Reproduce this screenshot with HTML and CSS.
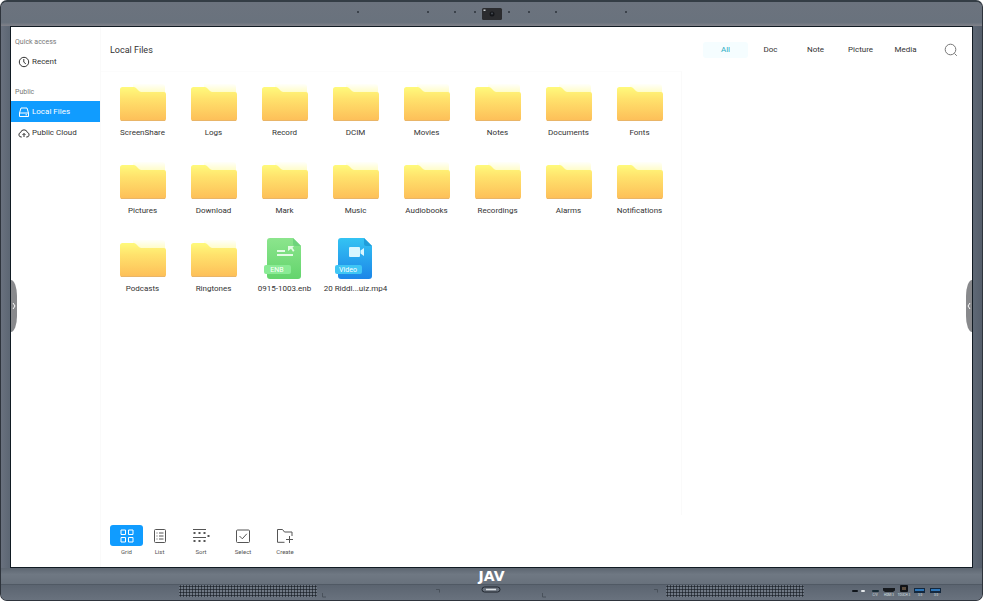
FILE: index.html
```html
<!DOCTYPE html>
<html lang="en">
<head>
    <meta charset="utf-8" />
    <meta name="viewport" content="width=device-width, initial-scale=1.0">
    <title>Local Files</title>
    <link rel="stylesheet" href="styles.css">
</head>
<body>
    <!-- shared icon shapes -->
    <svg class="defs" width="0" height="0" aria-hidden="true">
        <defs>
            <linearGradient id="folderFill" x1="0" y1="0" x2="0" y2="1">
                <stop offset="0" stop-color="#fffa7c" />
                <stop offset="0.35" stop-color="#ffe26c" />
                <stop offset="1" stop-color="#fdbe58" />
            </linearGradient>
            <linearGradient id="folderBack" x1="0" y1="0" x2="0" y2="1">
                <stop offset="0" stop-color="#fffffa" />
                <stop offset="1" stop-color="#fffcb8" />
            </linearGradient>
            <linearGradient id="greenFill" x1="0" y1="0" x2="0" y2="1">
                <stop offset="0" stop-color="#8ce58d" />
                <stop offset="1" stop-color="#63d46c" />
            </linearGradient>
            <linearGradient id="blueFill" x1="0" y1="0" x2="0" y2="1">
                <stop offset="0" stop-color="#34c3f3" />
                <stop offset="1" stop-color="#1c86e8" />
            </linearGradient>
            <symbol id="folder" viewBox="0 0 46 42">
                <path d="M13 2h29a3 3 0 0 1 3 3v8H13z" fill="url(#folderBack)" />
                <path d="M0 7.500q0-2.500 2.500-2.500h11q1.500 0 2.500 1l3 3q1 1 2.500 1H44q2 0 2 2v25q0 2-2 2H2q-2 0-2-2z" fill="url(#folderFill)" />
                <path d="M1 38.500h44" stroke="#e9b568" stroke-width="1" />
            </symbol>
        </defs>
    </svg>

    <div class="device">
        <div class="bezel-top">
            <svg width="280" height="14" viewBox="0 0 280 14" aria-hidden="true">
                <g fill="#2c333b">
                    <circle cx="6" cy="5" r="1" /><circle cx="76" cy="5" r="1" />
                    <circle cx="103" cy="5" r="1" /><circle cx="123" cy="5" r="1" />
                    <circle cx="157" cy="5" r="1" /><circle cx="177" cy="5" r="1" />
                    <circle cx="204" cy="5" r="1" /><circle cx="274" cy="5" r="1" />
                </g>
                <rect x="130" y="1" width="20" height="12" rx="1.500" fill="#2b2c2f" />
                <circle cx="140" cy="7" r="2.500" fill="#14161a" />
                <circle cx="140" cy="6.500" r="1" fill="#454a52" />
                <rect x="131.500" y="2.500" width="2" height="1.500" fill="#c9ced2" />
            </svg>
        </div>

        <div class="middle">
            <div class="screen">
                <nav class="sidebar">
                    <h2>Quick access</h2>
                    <a href="#recent">
                        <svg width="12" height="12" viewBox="0 0 12 12"><circle cx="6" cy="6" r="4.700" /><path d="M5.800 3v3.200l2 1.600" /></svg>
                        Recent
                    </a>
                    <h2 class="second">Public</h2>
                    <a href="#local" class="active">
                        <svg width="12" height="12" viewBox="0 0 12 12"><path d="M1.500 7 3 2h6l1.500 5v3.500h-9zM1.500 7h9M7.500 8.800h1.500" /></svg>
                        Local Files
                    </a>
                    <a href="#cloud">
                        <svg width="12" height="12" viewBox="0 0 12 12"><path d="M3.800 10H3.500a2.300 2.300 0 0 1-.9-4.500 3.500 3.500 0 0 1 6.800 0A2.300 2.300 0 0 1 8.500 10h-.3M6 10V6.500M4.500 8 6 6.500 7.500 8" /></svg>
                        Public Cloud
                    </a>
                </nav>

                <main class="content">
                    <header class="header">
                        <h1>Local Files</h1>
                        <div class="filters">
                            <button type="button" class="active">All</button>
                            <button type="button">Doc</button>
                            <button type="button">Note</button>
                            <button type="button">Picture</button>
                            <button type="button">Media</button>
                        </div>
                        <button type="button" class="search" aria-label="Search">
                            <svg width="14" height="14" viewBox="0 0 14 14"><circle cx="6.500" cy="6.500" r="5.300" /><path d="m10.500 10.500 2.300 2.300" /></svg>
                        </button>
                    </header>

                    <div class="files">
                        <button type="button"><svg><use href="#folder" /></svg>ScreenShare</button>
                        <button type="button"><svg><use href="#folder" /></svg>Logs</button>
                        <button type="button"><svg><use href="#folder" /></svg>Record</button>
                        <button type="button"><svg><use href="#folder" /></svg>DCIM</button>
                        <button type="button"><svg><use href="#folder" /></svg>Movies</button>
                        <button type="button"><svg><use href="#folder" /></svg>Notes</button>
                        <button type="button"><svg><use href="#folder" /></svg>Documents</button>
                        <button type="button"><svg><use href="#folder" /></svg>Fonts</button>
                        <button type="button"><svg><use href="#folder" /></svg>Pictures</button>
                        <button type="button"><svg><use href="#folder" /></svg>Download</button>
                        <button type="button"><svg><use href="#folder" /></svg>Mark</button>
                        <button type="button"><svg><use href="#folder" /></svg>Music</button>
                        <button type="button"><svg><use href="#folder" /></svg>Audiobooks</button>
                        <button type="button"><svg><use href="#folder" /></svg>Recordings</button>
                        <button type="button"><svg><use href="#folder" /></svg>Alarms</button>
                        <button type="button"><svg><use href="#folder" /></svg>Notifications</button>
                        <button type="button"><svg><use href="#folder" /></svg>Podcasts</button>
                        <button type="button"><svg><use href="#folder" /></svg>Ringtones</button>
                        <button type="button">
                            <svg viewBox="0 0 46 42">
                                <path d="M8 0h23l8 8v30a3 3 0 0 1-3 3H8a3 3 0 0 1-3-3V3a3 3 0 0 1 3-3z" fill="url(#greenFill)" />
                                <path d="M31 0l8 8h-6q-2 0-2-2z" fill="#6fd47c" />
                                <path d="M15 13h8M15 17h16" stroke="#e4fbe5" stroke-width="2" />
                                <path d="M26 8h6l-1.500 1.700 2 3-1.500 1-2-3L26 13z" fill="#e4fbe5" />
                                <rect x="2" y="27" width="27" height="9" rx="2" fill="#8aeb95" />
                                <text x="15" y="34" class="tag">ENB</text>
                            </svg>
                            0915-1003.enb
                        </button>
                        <button type="button">
                            <svg viewBox="0 0 46 42">
                                <path d="M8 0h23l8 8v30a3 3 0 0 1-3 3H8a3 3 0 0 1-3-3V3a3 3 0 0 1 3-3z" fill="url(#blueFill)" />
                                <path d="M31 0l8 8h-6q-2 0-2-2z" fill="#1f9edb" />
                                <rect x="16" y="9" width="11" height="10" rx="1" fill="#d9f6ff" />
                                <path d="M27.500 12.500 31 10v8l-3.500-2.500z" fill="#d9f6ff" />
                                <rect x="2" y="27" width="27" height="9" rx="2" fill="#3fc6f5" />
                                <text x="15" y="34" class="tag">Video</text>
                            </svg>
                            20 Riddl...uiz.mp4
                        </button>
                    </div>

                    <div class="toolbar">
                        <button type="button" class="grid-btn active">
                            <span><svg width="16" height="16" viewBox="0 0 16 16"><path d="M2 2h4.500v4.500H2zM9.500 2H14v4.500H9.500zM2 9.500h4.500V14H2zM9.500 9.500H14V14H9.500z" /></svg></span>
                            Grid
                        </button>
                        <button type="button" class="list-btn">
                            <span><svg width="16" height="16" viewBox="0 0 16 16"><rect x="2.500" y="1.500" width="11" height="13" rx="1" /><path d="M4.500 5h1M7 5h4.500M4.500 8h1M7 8h4.500M4.500 11h1M7 11h4.500" /></svg></span>
                            List
                        </button>
                        <button type="button">
                            <span><svg width="18" height="16" viewBox="0 0 18 16"><path d="M1 1.500h13M1 9.500h13" /><path d="M1.500 5h2M6.500 5h2M11.500 5h2M1.500 13h2M6.500 13h2M11.500 13h2M15.500 8h2" stroke-width="2" /></svg></span>
                            Sort
                        </button>
                        <button type="button">
                            <span><svg width="16" height="16" viewBox="0 0 16 16"><rect x="1.500" y="2" width="13" height="12.500" rx="1" /><path d="m4.500 8 2.800 2.800 4.500-5" /></svg></span>
                            Select
                        </button>
                        <button type="button">
                            <span><svg width="18" height="16" viewBox="0 0 18 16"><path d="M8.500 14.300h-7V1.500h5l2 2.500h7.500v4M10 11.500h7M13.500 8v7" /></svg></span>
                            Create
                        </button>
                    </div>
                </main>

                <button type="button" class="handle handle-left" aria-label="Open left menu">
                    <svg width="4" height="8" viewBox="0 0 4 8"><path d="m1 1 2 3-2 3" /></svg>
                </button>
                <button type="button" class="handle handle-right" aria-label="Open right menu">
                    <svg width="4" height="8" viewBox="0 0 4 8"><path d="M3 1 1 4l2 3" /></svg>
                </button>
            </div>
        </div>

        <div class="bezel-bottom">
            <div class="brand">JAV</div>
            <div class="front">
                <div class="side"></div>
                <div class="speaker"></div>
                <div class="power">
                    <svg width="340" height="15" viewBox="0 0 340 15" aria-hidden="true">
                        <path d="M1.500 8v4H5M115 4.500h3.500v3M221.500 8v4h3.500M333 4.500h3.500v3" fill="none" stroke="#49515b" />
                        <rect x="161" y="2" width="18" height="5" rx="2.500" fill="#69717c" stroke="#20272f" />
                        <path d="M165 4.500h10" stroke="#dfe3e6" stroke-width="1.500" />
                    </svg>
                </div>
                <div class="speaker"></div>
                <div class="side ports">
                    <svg width="92" height="15" viewBox="0 0 92 15" aria-hidden="true">
                        <rect x="2" y="5" width="6" height="2" rx="1" fill="#11161c" />
                        <rect x="11" y="5" width="4" height="2" rx="1" fill="#e2e6e9" />
                        <rect x="22" y="5" width="7" height="2" rx="1" fill="#172b35" />
                        <path d="M33 3h12v2.500L43 7h-8l-2-1.500z" fill="#171a1e" />
                        <rect x="50" y="0" width="8" height="7" rx="1" fill="#111317" />
                        <rect x="52" y="2" width="4" height="3" fill="#5b4c3e" />
                        <rect x="64" y="3" width="11" height="5" fill="#14283e" /><path d="M65 5h9" stroke="#2d75b7" stroke-width="2" />
                        <rect x="80" y="3" width="11" height="5" fill="#14283e" /><path d="M81 5h9" stroke="#2d75b7" stroke-width="2" />
                        <text x="25" y="11">C/V</text>
                        <text x="39" y="11">HDMI 3</text>
                        <text x="54" y="11">TOUCH 3</text>
                        <text x="70" y="11">3.0</text>
                        <text x="86" y="11">3.0</text>
                    </svg>
                </div>
            </div>
        </div>
    </div>
</body>
</html>
```

FILE: styles.css
```css
* {
    box-sizing: border-box;
}

body {
    margin: 0;
    background-color: white;
    font-family: Roboto, Arial, sans-serif;
    font-size: 8px;
    line-height: 12px;
    color: #333;
}

button {
    font: inherit;
    color: inherit;
    background: none;
    border: none;
    padding: 0;
}

h1, h2 {
    margin: 0;
    font-weight: 400;
}

.defs {
    position: absolute;
}

.device {
    display: flex;
    flex-direction: column;
    height: 100vh;
    min-height: 480px;
    border: 1px solid #2e343c;
    border-top: 2px solid #343d45;
    border-radius: 7px;
    background-color: #69717d;
    overflow: hidden;
}

.bezel-top {
    display: flex;
    justify-content: center;
    height: 24px;
    padding-top: 5px;
    background: linear-gradient(#6c737e, #69727d 85%, #81828a);
}

.middle {
    flex: 1;
    display: flex;
    padding: 0 9px;
    min-height: 0;
    background: linear-gradient(to right, #69717e, #5d6774 8px, #5d6774 calc(100% - 8px), #555e6b);
}

.screen {
    position: relative;
    flex: 1;
    display: flex;
    border: 1px solid #111b23;
    background-color: white;
}

/* sidebar */
.sidebar {
    width: 90px;
    padding-top: 9px;
    border-right: 1px solid #fafafa;
}

.sidebar h2 {
    padding-left: 4px;
    font-size: 7px;
    line-height: 12px;
    color: #777;
}

.sidebar .second {
    margin-top: 14px;
}

.sidebar a {
    display: flex;
    align-items: center;
    gap: 2px;
    height: 21px;
    padding-left: 7px;
    color: #333;
    text-decoration: none;
}

.sidebar h2 + a {
    margin-top: 3px;
}

.sidebar .active {
    background-color: #109cff;
    color: white;
}

.sidebar svg, .search svg, .toolbar svg, .handle svg {
    fill: none;
    stroke: currentColor;
    stroke-width: 1;
}

/* main area */
.content {
    flex: 1;
    display: flex;
    flex-direction: column;
    min-width: 0;
}

.header {
    display: flex;
    align-items: center;
    height: 44px;
    padding: 2px 14px 0 9px;
}

.header h1 {
    flex: 1;
    font-size: 9px;
}

.filters {
    display: flex;
}

.filters button {
    width: 45px;
    height: 16px;
}

.filters .active {
    background-color: #f5fdff;
    border-radius: 3px;
    color: #2badc5;
}

.search {
    display: flex;
    margin-left: 16px;
    color: #777;
}

.files {
    flex: 1;
    display: grid;
    grid-template-columns: repeat(8, 71px);
    grid-auto-rows: 78px;
    align-content: start;
    width: 581px;
    padding: 10px 6px 0;
    border-top: 1px solid #fcfcfc;
    border-right: 1px solid #fafafa;
}

.files button {
    display: flex;
    flex-direction: column;
    align-items: center;
    justify-content: flex-start;
    gap: 3px;
    font-size: 8px;
    white-space: nowrap;
}

.files svg {
    width: 46px;
    height: 42px;
}

.tag {
    font-size: 7px;
    text-anchor: middle;
    fill: white;
}

.toolbar {
    display: flex;
    padding: 10px 0 9px 9px;
}

.toolbar button {
    display: flex;
    flex-direction: column;
    align-items: center;
    width: 42px;
    font-size: 6px;
    color: #555;
}

.toolbar span {
    display: flex;
    align-items: center;
    justify-content: center;
    width: 33px;
    height: 21px;
}

.toolbar .grid-btn {
    width: 33px;
}

.toolbar .list-btn {
    width: 33px;
    margin-right: 4px;
}

.toolbar .active span {
    background-color: #109cff;
    border-radius: 3px;
    color: white;
}

/* pull-out handles on both edges */
.handle {
    position: absolute;
    top: 50%;
    display: flex;
    align-items: center;
    justify-content: center;
    width: 6px;
    height: 52px;
    margin-top: -17px;
    background-color: #88898c;
    color: white;
}

.handle-left {
    left: 0;
    border-radius: 0 6px 6px 0 / 0 16px 16px 0;
}

.handle-right {
    right: 0;
    border-radius: 6px 0 0 6px / 16px 0 0 16px;
}

/* bottom bezel */
.bezel-bottom {
    background-color: #646d79;
}

.brand {
    height: 16px;
    background: linear-gradient(#5d6671, #6f7883 40%, #68717c);
    font-family: "DejaVu Sans", sans-serif;
    font-size: 14px;
    font-weight: 700;
    line-height: 16px;
    text-align: center;
    color: white;
}

.front {
    display: flex;
    height: 16px;
    border-top: 1px solid #505964;
    background: linear-gradient(#5b6470, #69727e);
}

.side {
    flex: 1 1 178px;
    min-width: 0;
}

.speaker {
    width: 139px;
    height: 12px;
    border-radius: 2px;
    background-color: #707985;
    background-image: radial-gradient(circle, #20262e 40%, transparent 65%);
    background-size: 3px 3px;
}

.power {
    display: flex;
    justify-content: center;
    width: 349px;
}

.ports {
    display: flex;
    justify-content: flex-end;
    padding-right: 40px;
}

.ports text {
    font-size: 3px;
    text-anchor: middle;
    fill: #dfe3e6;
}
```
